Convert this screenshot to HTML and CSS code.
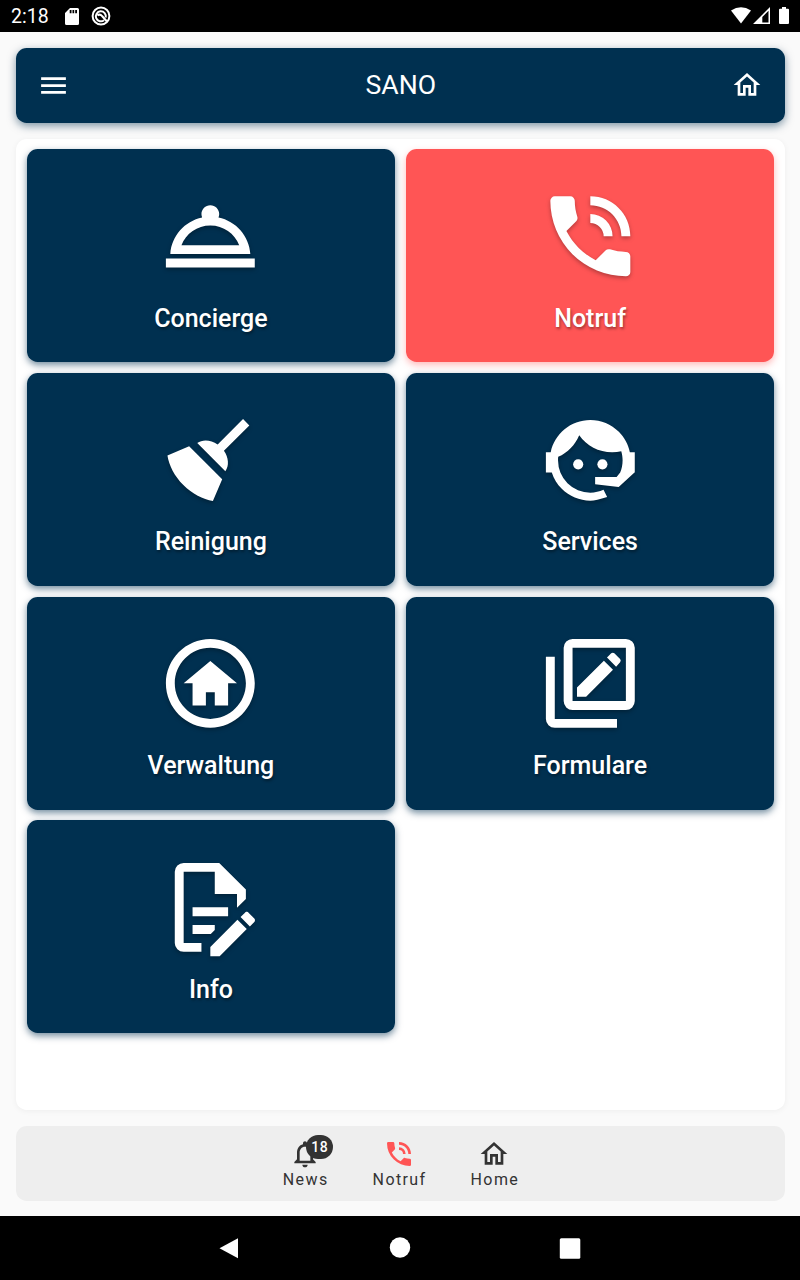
FILE: index.html
```html
<!DOCTYPE html>
<html lang="de">

<head>
    <meta charset="UTF-8">
    <meta name="viewport" content="width=device-width, initial-scale=1.0">
    <title>SANO</title>
    <link rel="stylesheet" href="styles.css">
</head>

<body>
    <div class="statusbar">
        <span class="clock">2:18</span>
        <svg class="sd" viewBox="0 0 14 17"><path fill-rule="evenodd" d="M5 0H12.5Q14 0 14 1.5V15.5Q14 17 12.5 17H1.500Q0 17 0 15.500V5ZM4.700 2V5.300H6.500V2ZM7.500 2V5.300H9.200V2ZM10.200 2V5.300H12V2Z"/></svg>
        <svg class="app" viewBox="0 0 20 20"><circle cx="10" cy="10" r="8.400"/><path d="M13 14.200A5 5 0 1 1 14.700 11.500M6.500 9.500Q9 7.500 11 10L16 15.500"/></svg>
        <div class="system">
            <svg width="20" height="17" viewBox="0 0 20 17"><path d="M0 3.500Q10-3 20 3.500L10 16.500Z"/></svg>
            <svg width="17" height="17" viewBox="0 0 17 17"><path fill-rule="evenodd" d="M17 0V17H0ZM15.500 3.800L9.300 10V15.500H15.500Z"/></svg>
            <svg class="battery" width="10" height="17" viewBox="0 0 10 17"><path d="M3 0H7V1.700H9Q10 1.700 10 2.700V16Q10 17 9 17H1Q0 17 0 16V2.700Q0 1.700 1 1.700H3Z"/></svg>
        </div>
    </div>

    <div class="page">
        <header class="header">
            <svg class="menu" viewBox="0 0 24 24"><path d="M3 6H21V8H3V6M3 11H21V13H3V11M3 16H21V18H3V16Z"/></svg>
            <h1>SANO</h1>
            <svg class="home" viewBox="0 0 24 24"><path d="M12 5.690L17 10.190V18H15V12H9V18H7V10.190L12 5.690M12 3L2 12H5V20H11V14H13V20H19V12H22"/></svg>
        </header>

        <main class="panel">
            <div class="tile">
                <svg viewBox="0 0 24 24"><path d="M2 17h20v2H2v-2zm11.840-9.210c.1-.24.16-.51.16-.79 0-1.100-.9-2-2-2s-2 .9-2 2c0 .28.06.55.16.79C6.250 8.600 3.270 11.930 3 16h18c-.27-4.070-3.250-7.400-7.160-8.210zM12 9.580c2.950 0 5.470 1.830 6.500 4.410h-13c1.030-2.580 3.550-4.410 6.500-4.410z"/></svg>
                <span>Concierge</span>
            </div>
            <div class="tile alert">
                <svg viewBox="0 0 24 24"><path d="M15 12H17A5 5 0 0 0 12 7V9A3 3 0 0 1 15 12M19 12H21C21 7 16.970 3 12 3V5C15.860 5 19 8.130 19 12M20 15.500C18.750 15.500 17.550 15.300 16.430 14.930C16.080 14.820 15.690 14.900 15.410 15.180L13.210 17.380C10.380 15.940 8.060 13.620 6.620 10.790L8.820 8.590C9.100 8.310 9.180 7.920 9.070 7.570C8.700 6.450 8.500 5.250 8.500 4A1 1 0 0 0 7.500 3H4A1 1 0 0 0 3 4A17 17 0 0 0 20 21A1 1 0 0 0 21 20V16.500A1 1 0 0 0 20 15.500Z"/></svg>
                <span>Notruf</span>
            </div>
            <div class="tile">
                <svg viewBox="0 0 24 24"><path d="M19.360 2.720L20.780 4.140L15.060 9.850C16.130 11.390 16.280 13.240 15.380 14.440L9.060 8.120C10.260 7.220 12.110 7.370 13.650 8.440L19.360 2.720M5.930 17.570C3.920 15.560 2.690 13.160 2.350 10.920L7.230 8.830L14.670 16.270L12.580 21.150C10.340 20.810 7.940 19.580 5.930 17.570Z"/></svg>
                <span>Reinigung</span>
            </div>
            <div class="tile">
                <svg viewBox="0 0 24 24"><path d="M18.720 14.760C19.070 13.910 19.260 13 19.260 12C19.260 11.280 19.150 10.590 18.960 9.950C18.310 10.100 17.630 10.180 16.920 10.180C13.860 10.180 11.150 8.670 9.500 6.340C8.610 8.500 6.910 10.260 4.770 11.220C4.730 11.470 4.730 11.740 4.730 12A7.270 7.270 0 0 0 12 19.270C13.050 19.270 14.060 19.040 14.970 18.630C15.540 19.720 15.800 20.260 15.780 20.260C14.140 20.810 12.870 21.080 12 21.080C9.580 21.080 7.270 20.130 5.570 18.420C4.530 17.380 3.760 16.110 3.330 14.730H2V10.180H3.090C3.930 6.040 7.600 2.920 12 2.920C14.400 2.920 16.710 3.870 18.420 5.580C19.690 6.840 20.540 8.450 20.890 10.180H22V14.730H21.940L18.380 18L13.080 17.400V15.730H17.910L18.720 14.760Z"/><circle cx="9.270" cy="12.910" r="1.140"/><circle cx="14.720" cy="12.910" r="1.140"/></svg>
                <span>Services</span>
            </div>
            <div class="tile">
                <svg viewBox="0 0 24 24"><path d="M12 20C7.600 20 4 16.400 4 12S7.600 4 12 4 20 7.600 20 12 16.400 20 12 20M12 2C6.500 2 2 6.500 2 12S6.500 22 12 22 22 17.500 22 12 17.500 2 12 2M11 14H13V17H16V12H18L12 7L6 12H8V17H11V14"/></svg>
                <span>Verwaltung</span>
            </div>
            <div class="tile">
                <svg viewBox="0 0 24 24"><path fill-rule="evenodd" d="M8 2H20A2 2 0 0 1 22 4V16A2 2 0 0 1 20 18H8A2 2 0 0 1 6 16V4A2 2 0 0 1 8 2M8 4V16H20V4H8M2 6H4V20H18V22H4A2 2 0 0 1 2 20V6M9 12.950L15.050 6.900L17.100 8.950L11.050 15H9V12.950M15.750 6.200L16.700 5.250Q17.050 4.950 17.400 5.250L18.700 6.550Q19 6.900 18.700 7.250L17.800 8.250Z"/></svg>
                <span>Formulare</span>
            </div>
            <div class="tile">
                <svg viewBox="0 0 24 24"><path d="M8 12H16V14H8V12M10 20H6V4H13V9H18V12.100L20 10.100V8L14 2H6A2 2 0 0 0 4 4V20A2 2 0 0 0 6 22H10V20M8 18H12.100L13 17.100V16H8V18M20.200 13C20.300 13 20.500 13.100 20.600 13.200L21.900 14.500C22.100 14.700 22.100 15.100 21.900 15.300L20.900 16.300L18.800 14.200L19.800 13.200C19.900 13.100 20 13 20.200 13M20.200 16.900L14.100 23H12V20.900L18.100 14.800L20.200 16.900Z"/></svg>
                <span>Info</span>
            </div>
        </main>

        <nav class="tabs">
            <a class="tab">
                <svg viewBox="0 0 24 24"><path d="M12 22c1.100 0 2-.9 2-2h-4c0 1.100.9 2 2 2zm6-6v-5c0-3.070-1.630-5.640-4.500-6.320V4c0-.83-.67-1.500-1.500-1.500s-1.500.67-1.500 1.500v.68C7.640 5.360 6 7.920 6 11v5l-2 2v1h16v-1l-2-2zm-2 1H8v-6c0-2.480 1.510-4.500 4-4.500s4 2.020 4 4.500v6z"/></svg>
                <span class="badge">18</span>
                <span>News</span>
            </a>
            <a class="tab emergency">
                <svg viewBox="0 0 24 24"><path d="M15 12H17A5 5 0 0 0 12 7V9A3 3 0 0 1 15 12M19 12H21C21 7 16.970 3 12 3V5C15.860 5 19 8.130 19 12M20 15.500C18.750 15.500 17.550 15.300 16.430 14.930C16.080 14.820 15.690 14.900 15.410 15.180L13.210 17.380C10.380 15.940 8.060 13.620 6.620 10.790L8.820 8.590C9.100 8.310 9.180 7.920 9.070 7.570C8.700 6.450 8.500 5.250 8.500 4A1 1 0 0 0 7.500 3H4A1 1 0 0 0 3 4A17 17 0 0 0 20 21A1 1 0 0 0 21 20V16.500A1 1 0 0 0 20 15.500Z"/></svg>
                <span>Notruf</span>
            </a>
            <a class="tab">
                <svg viewBox="0 0 24 24"><path d="M12 5.690L17 10.190V18H15V12H9V18H7V10.190L12 5.690M12 3L2 12H5V20H11V14H13V20H19V12H22"/></svg>
                <span>Home</span>
            </a>
        </nav>
    </div>

    <div class="softkeys">
        <svg viewBox="0 0 22 22"><path d="M20 1.200V21.200L1.500 11.300Z"/></svg>
        <svg viewBox="0 0 22 22"><circle cx="11" cy="10.500" r="10.200"/></svg>
        <svg viewBox="0 0 22 22"><rect x="0.800" y="1.300" width="20.500" height="20.500" rx="1.500"/></svg>
    </div>
</body>

</html>
```
FILE: styles.css
```css
* {
    box-sizing: border-box;
}

body {
    margin: 0;
    height: 1280px;
    display: flex;
    flex-direction: column;
    font-family: Roboto, sans-serif;
    background-color: #fafafa;
    overflow: hidden;
}

svg {
    display: block;
    flex: none;
    fill: currentColor;
}

.statusbar {
    height: 32px;
    padding: 0 11px;
    display: flex;
    align-items: center;
    background-color: #000;
    color: #fff;
}

.clock {
    width: 54px;
    font-size: 19.5px;
}

.sd {
    width: 14px;
    height: 17px;
}

.app {
    width: 20px;
    height: 20px;
    margin-left: 12px;
    fill: none;
    stroke: currentColor;
    stroke-width: 2;
}

.system {
    margin-left: auto;
    display: flex;
    gap: 2px;
    padding-bottom: 2px;
}

.battery {
    margin-left: 7px;
}

.page {
    flex: 1;
    padding: 16px 15px 15px 16px;
    display: flex;
    flex-direction: column;
    justify-content: space-between;
}

.header {
    height: 75px;
    padding: 0 21.5px 1px 21px;
    display: flex;
    align-items: center;
    justify-content: space-between;
    border-radius: 10.67px;
    background-color: #003050;
    color: #fff;
    box-shadow: 0 3px 8px rgba(0, 48, 80, 0.5);
}

.header h1 {
    margin: 0;
    font-size: 26.67px;
    font-weight: 400;
    line-height: 30px;
}

.menu {
    width: 33px;
    height: 33px;
}

.home {
    width: 32px;
    height: 32px;
}

.panel {
    height: 971.5px;
    padding: 10.67px;
    display: grid;
    grid-template-columns: 1fr 1fr;
    grid-auto-rows: 213px;
    gap: 10.6px 10.67px;
    border-radius: 10.67px;
    background-color: #fff;
    box-shadow: 0 1px 6px rgba(0, 0, 0, 0.05);
}

.tile {
    padding-top: 33.5px;
    display: flex;
    flex-direction: column;
    align-items: center;
    border-radius: 10.67px;
    background-color: #003050;
    color: #fff;
    font-size: 25px;
    font-weight: 500;
    box-shadow: 0 3px 7px rgba(0, 48, 80, 0.55);
}

.tile svg {
    width: 106.67px;
    height: 106.67px;
    margin-right: 0.4px;
    filter: drop-shadow(0 2px 2px rgba(0, 0, 0, 0.3));
}

.tile span {
    margin-top: 14.2px;
    line-height: 30px;
    text-shadow: 1px 2px 3px rgba(0, 0, 0, 0.4);
}

.alert {
    background-color: #ff5555;
    box-shadow: 0 3px 7px rgba(255, 85, 85, 0.4);
}

.tabs {
    height: 75px;
    padding: 12px 0 0 1px;
    display: flex;
    justify-content: center;
    gap: 44px;
    border-radius: 10.67px;
    background-color: #eee;
    color: #333;
}

.tab {
    position: relative;
    display: flex;
    flex-direction: column;
    align-items: center;
    font-size: 16px;
    letter-spacing: 1.4px;
}

.tab svg {
    width: 32px;
    height: 32px;
    margin-right: 1px;
}

.tab span {
    line-height: 20px;
}

.emergency svg {
    color: #ff5555;
}

.tab .badge {
    position: absolute;
    top: -3px;
    left: 23.5px;
    width: 27px;
    height: 24px;
    border-radius: 12px;
    background-color: #333;
    color: #fff;
    font-size: 14px;
    font-weight: 500;
    line-height: 24px;
    letter-spacing: 0.5px;
    text-align: center;
}

.softkeys {
    height: 64px;
    padding: 0 219px 0 218px;
    display: flex;
    align-items: center;
    justify-content: space-between;
    background-color: #000;
    color: #fff;
}

.softkeys svg {
    width: 22px;
    height: 22px;
}
```
